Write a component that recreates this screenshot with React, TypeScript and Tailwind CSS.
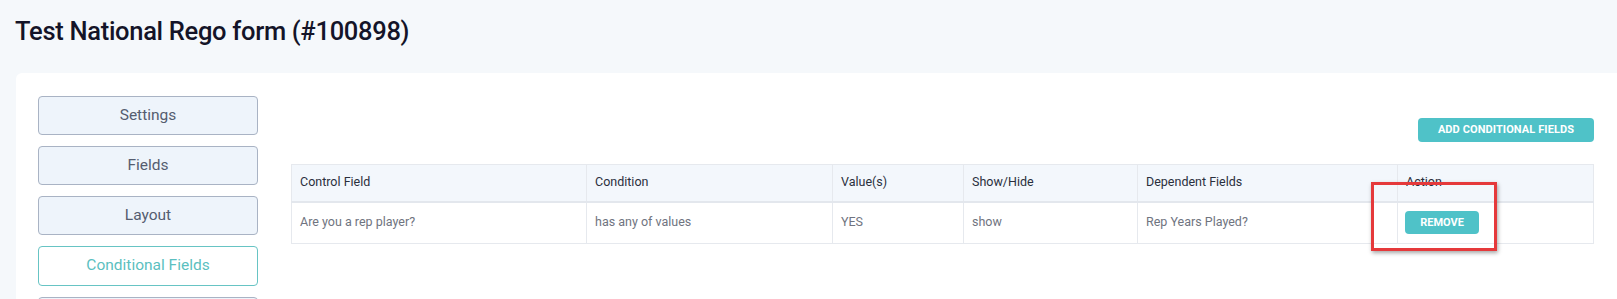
import React from "react";

// last tab is cut off at the bottom of the frame, its label isn't visible
const TABS = ["Settings", "Fields", "Layout", "Conditional Fields", ""];
const ACTIVE_TAB = "Conditional Fields";

const COLUMNS = [
  { label: "Control Field", width: "w-[295px]" },
  { label: "Condition", width: "w-[246px]" },
  { label: "Value(s)", width: "w-[131px]" },
  { label: "Show/Hide", width: "w-[174px]" },
  { label: "Dependent Fields", width: "w-[260px]" },
  { label: "Action", width: "" },
];

const ROWS = [
  {
    control: "Are you a rep player?",
    condition: "has any of values",
    values: "YES",
    showHide: "show",
    dependent: "Rep Years Played?",
  },
];

export default function App() {
  return (
    <div
      className="relative min-h-screen bg-[#f5f8fb] text-[#1b1b2f]"
      style={{ fontFamily: "Roboto, 'Noto Sans', sans-serif" }}
    >
      <h1 className="pl-[15px] pt-[16px] h-[73px] text-[25.5px] font-medium leading-[30px] tracking-[-0.3px] text-[#141428]">
        Test National Rego form (#100898)
      </h1>

      <div className="ml-4 flex rounded-l-md bg-white pl-[22px] pt-[23px] pr-[23px] pb-6">
        {/* sidebar */}
        <div className="flex w-[220px] shrink-0 flex-col gap-[11px]">
          {TABS.map((tab, i) =>
            tab === ACTIVE_TAB ? (
              <button
                key={i}
                className="h-[40px] rounded-[4px] border border-[#67c4c4] bg-white text-[15.5px] text-[#5bbfc0]"
              >
                {tab}
              </button>
            ) : (
              <button
                key={i}
                className="h-[39px] rounded-[4px] border border-[#a9b3c4] bg-[#eef4fb] text-[15.5px] text-[#555d70]"
              >
                {tab}
              </button>
            )
          )}
        </div>

        {/* main */}
        <div className="ml-[33px] flex flex-1 flex-col">
          <div className="mt-[22px] flex justify-end">
            <button className="h-[24px] w-[176px] rounded-[4px] bg-[#4fc2c8] text-[11px] font-bold uppercase tracking-[0.1px] text-white">
              Add Conditional Fields
            </button>
          </div>

          <table className="mt-[22px] w-full table-fixed border-collapse border border-[#e6e9ee] text-[12.5px]">
            <thead>
              <tr className="h-[37px] border-b-2 border-[#e3e7ed] bg-[#f3f7fc]">
                {COLUMNS.map((c) => (
                  <th
                    key={c.label}
                    className={`${c.width} border-r border-[#e6e9ee] px-2 text-left font-normal text-[#2a2f3d]`}
                  >
                    {c.label}
                  </th>
                ))}
              </tr>
            </thead>
            <tbody>
              {ROWS.map((r) => (
                <tr key={r.control} className="h-[42px] text-[#6f7480]">
                  <td className="border-r border-[#e6e9ee] px-2">{r.control}</td>
                  <td className="border-r border-[#e6e9ee] px-2">{r.condition}</td>
                  <td className="border-r border-[#e6e9ee] px-2">{r.values}</td>
                  <td className="border-r border-[#e6e9ee] px-2">{r.showHide}</td>
                  <td className="border-r border-[#e6e9ee] px-2">{r.dependent}</td>
                  <td className="px-[7px]">
                    <button className="h-[23px] w-[74px] rounded-[4px] bg-[#4fc2c8] text-[11px] font-bold uppercase text-white">
                      Remove
                    </button>
                  </td>
                </tr>
              ))}
            </tbody>
          </table>
        </div>
      </div>

      {/* annotation highlight */}
      <div className="pointer-events-none absolute left-[1371px] top-[182px] h-[69px] w-[126px] border-[3px] border-[#e5393b] shadow-[1px_2px_4px_rgba(0,0,0,0.35)]" />
    </div>
  );
}
